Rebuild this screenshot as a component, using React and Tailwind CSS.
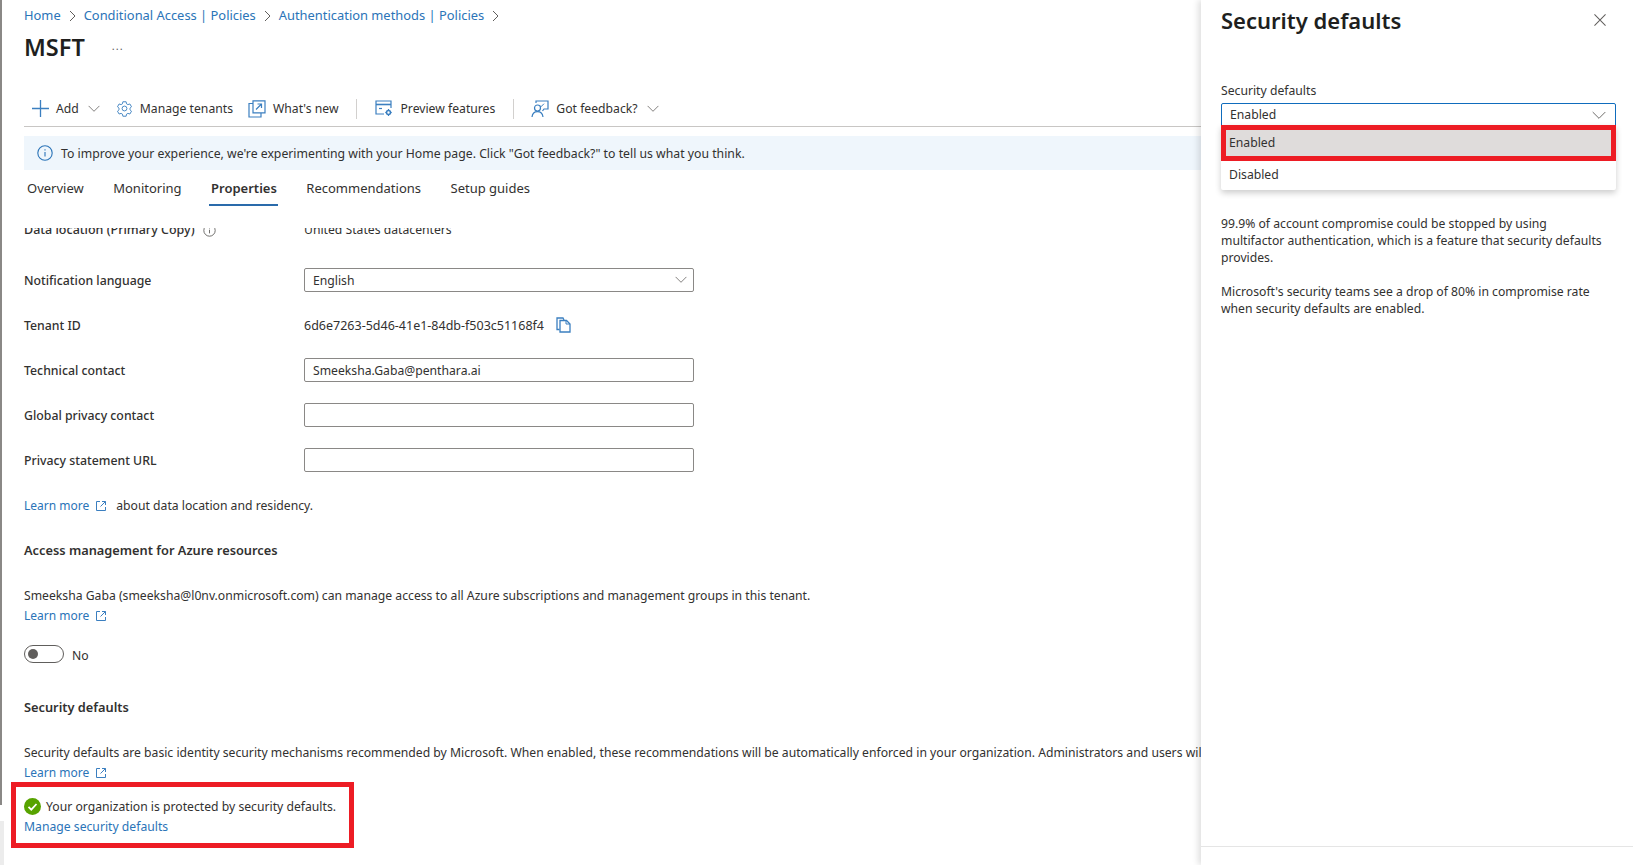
import { Fragment } from "react";

const link = "text-[#2b74b8]";
const blue = "#3b7fc0";

function Chev({ size = 12, color = "#605e5c", className = "" }) {
  return (
    <svg width={size} height={size * 0.6} viewBox="0 0 20 12" className={className} fill="none" stroke={color} strokeWidth="1.3">
      <path d="M1 1.5l9 9 9-9" />
    </svg>
  );
}

function Crumb({ children }) {
  return (
    <Fragment>
      <a className={link}>{children}</a>
      <svg width="7" height="12" viewBox="0 0 7 12" fill="none" stroke="#605e5c" strokeWidth="1">
        <path d="M1 1l5 5-5 5" />
      </svg>
    </Fragment>
  );
}

function External() {
  return (
    <svg width="10" height="10" viewBox="0 0 10 10" fill="none" stroke={blue} strokeWidth="1">
      <path d="M4 .5H.5v9h9V6M6 .5h3.500V4M9.500.5L4.500 5.500" />
    </svg>
  );
}

function LearnMore({ className = "" }) {
  return (
    <div className={`flex items-center gap-[7px] text-[12px] ${className}`}>
      <a className={link}>Learn more</a>
      <External />
    </div>
  );
}

function Gear() {
  return (
    <svg width="17" height="17" viewBox="0 0 24 24" fill="none" stroke={blue} strokeWidth="1.3">
      <path d="M9.700 2.500h4.600l.6 2.900 1.900 1.100 2.800-.9 2.300 4-2.200 2 0 2.200 2.200 2-2.300 4-2.800-.9-1.900 1.100-.6 2.900H9.700l-.6-2.900-1.900-1.100-2.800.9-2.300-4 2.200-2v-2.200l-2.200-2 2.300-4 2.800.9 1.900-1.100z" />
      <circle cx="12" cy="12" r="3.400" />
    </svg>
  );
}

function WhatsNew() {
  return (
    <svg width="18" height="18" viewBox="0 0 18 18" fill="none" stroke={blue} strokeWidth="1.2">
      <path d="M5 3.500H1v13.500h12v-4" />
      <path d="M5 .8h12v12H5z" />
      <path d="M8 9.500l5.500-5.500M9.500 4h4v4" />
    </svg>
  );
}

function Preview() {
  return (
    <svg width="18" height="17" viewBox="0 0 18 17" fill="none" stroke={blue} strokeWidth="1.2">
      <path d="M9 14H1V1h15v7" />
      <path d="M1 4.500h15" strokeWidth="1.6" />
      <path d="M4 8.500h3" />
      <circle cx="13.500" cy="12.500" r="2" strokeWidth="1.6" />
      <path d="M13.500 9v1M13.500 15v1M10.300 12.500h1M15.700 12.500h1" />
    </svg>
  );
}

function Feedback() {
  return (
    <svg width="18" height="18" viewBox="0 0 18 18" fill="none" stroke={blue} strokeWidth="1.2">
      <circle cx="6.500" cy="8" r="3" />
      <path d="M1 17c.4-3.400 2.500-5.400 5.500-5.400S11.600 13.600 12 17" />
      <path d="M5 3V1h12v8h-4l-1.500 2" />
      <path d="M8.500 5.200l1.500 1.500 3-3" strokeWidth="1" />
    </svg>
  );
}

function ToolBtn({ icon, label, chevron }) {
  return (
    <div className="flex items-center gap-[7px]">
      {icon}
      <span>{label}</span>
      {chevron && <Chev className="ml-[2px]" />}
    </div>
  );
}

function Row({ label, children }) {
  return (
    <div className="flex h-[24px] items-center">
      <div className="w-[280px] pt-[2px] text-[12.300px] font-medium">{label}</div>
      {children}
    </div>
  );
}

function Field({ value, children }) {
  return (
    <div className="flex h-[24px] w-[390px] items-center justify-between rounded-[2px] border border-[#8a8886] bg-white pl-2 pr-[6px]">
      <span className="pt-[2px]">{value}</span>
      {children}
    </div>
  );
}

export default function App() {
  return (
    <div className="flex h-[865px] w-[1633px] overflow-hidden bg-white font-['Noto_Sans',sans-serif] text-[12.2px] text-[#323130]">
      <div className="flex w-[4px] shrink-0 flex-col">
        <div className="h-[805px] w-[2px] bg-[#8a8886]" />
        <div className="mt-[16px] flex-1 bg-[#ececec]" />
      </div>

      <main className="flex min-w-0 flex-1 flex-col pl-[20px]">
        <nav className="flex h-[31px] items-center gap-[8px] text-[12.900px]">
          <Crumb>Home</Crumb>
          <Crumb>Conditional Access | Policies</Crumb>
          <Crumb>Authentication methods | Policies</Crumb>
        </nav>

        <div className="mt-[3px] flex h-[28px] items-center">
          <h1 className="text-[23.500px] font-semibold leading-none text-[#201f1e]">MSFT</h1>
          <span className="ml-[27px] mb-[4px] text-[11px] tracking-[1px] text-[#605e5c]">...</span>
        </div>

        <div className="mt-[31px] flex h-[34px] items-center border-b border-[#c8c6c4] pb-[1px] pl-[8px]">
          <ToolBtn
            icon={
              <svg width="17" height="17" viewBox="0 0 17 17" stroke={blue} strokeWidth="1.3">
                <path d="M8.500 0v17M0 8.500h17" />
              </svg>
            }
            label="Add"
            chevron
          />
          <div className="ml-[16px]"><ToolBtn icon={<Gear />} label="Manage tenants" /></div>
          <div className="ml-[15px]"><ToolBtn icon={<WhatsNew />} label="What's new" /></div>
          <div className="mx-[18px] h-[20px] w-px bg-[#d2d0ce]" />
          <ToolBtn icon={<Preview />} label="Preview features" />
          <div className="ml-[18px] mr-[17px] h-[20px] w-px bg-[#d2d0ce]" />
          <ToolBtn icon={<Feedback />} label="Got feedback?" chevron />
        </div>

        <div className="mt-[9px] flex h-[34px] items-center gap-[8px] bg-[#eff6fc] pl-[13px]">
          <svg width="16" height="16" viewBox="0 0 16 16" fill="none" stroke="#2b74b8" strokeWidth="1.100">
            <circle cx="8" cy="8" r="7.200" />
            <path d="M8 7v4.500M8 4.200v1.300" />
          </svg>
          <span className="whitespace-nowrap pt-[2px] text-[12.250px]">To improve your experience, we're experimenting with your Home page. Click "Got feedback?" to tell us what you think.</span>
        </div>

        <div className="flex h-[32px] items-start gap-[29.500px] pl-[3px] pt-[9px] text-[13px]">
          <span>Overview</span>
          <span>Monitoring</span>
          <span className="relative font-semibold">
            Properties
            <span className="absolute -left-[2px] -right-[1px] top-[25px] h-[2px] bg-[#2a6bab]" />
          </span>
          <span>Recommendations</span>
          <span>Setup guides</span>
        </div>

        <div className="-ml-[13px] mt-[26px] min-h-0 flex-1 overflow-hidden pl-[13px]">
          <div className="-mt-[8px] flex h-[20px] items-center">
            <div className="flex w-[280px] items-center gap-[8px] text-[12.500px] font-medium">
              Data location (Primary Copy)
              <svg width="13" height="13" viewBox="0 0 16 16" fill="none" stroke="#605e5c" strokeWidth="1.100">
                <circle cx="8" cy="8" r="7" />
                <path d="M8 7v4.500M8 4.200v1.300" />
              </svg>
            </div>
            <span>United States datacenters</span>
          </div>

          <div className="mt-[28px] flex flex-col gap-[21px]">
            <Row label="Notification language">
              <Field value="English"><Chev /></Field>
            </Row>
            <Row label="Tenant ID">
              <span className="pt-[2px] text-[12.500px]">6d6e7263-5d46-41e1-84db-f503c51168f4</span>
              <svg className="ml-[12px]" width="15" height="16" viewBox="0 0 15 16" fill="none" stroke={blue} strokeWidth="1.300">
                <path d="M3.500 12.500H1V1h6l1 2" />
                <path d="M4 3.500h6.500l3.500 3.500v8H4z" />
                <path d="M10 3.500V7h4" strokeWidth="1" />
              </svg>
            </Row>
            <Row label="Technical contact"><Field value="Smeeksha.Gaba@penthara.ai" /></Row>
            <Row label="Global privacy contact"><Field /></Row>
            <Row label="Privacy statement URL"><Field /></Row>
          </div>

          <div className="mt-[24px] flex h-[20px] items-center gap-[10px]">
            <LearnMore />
            <span>about data location and residency.</span>
          </div>

          <h2 className="mt-[24px] text-[12.800px] font-semibold leading-[20px]">Access management for Azure resources</h2>

          <p className="mt-[26px] whitespace-nowrap leading-[20px]">Smeeksha Gaba (smeeksha@l0nv.onmicrosoft.com) can manage access to all Azure subscriptions and management groups in this tenant.</p>
          <LearnMore className="mt-[1px]" />

          <div className="mt-[17px] flex items-center gap-[8px]">
            <div className="flex h-[18px] w-[40px] items-center rounded-full border border-[#605e5c] pl-[3px]">
              <span className="h-[10px] w-[10px] rounded-full bg-[#605e5c]" />
            </div>
            <span className="pt-[5px]">No</span>
          </div>

          <h2 className="mt-[32px] text-[12.800px] font-semibold leading-[20px]">Security defaults</h2>

          <p className="mt-[26px] whitespace-nowrap leading-[20px]">Security defaults are basic identity security mechanisms recommended by Microsoft. When enabled, these recommendations will be automatically enforced in your organization. Administrators and users will be better protected from common attacks.</p>
          <LearnMore className="mt-[1px]" />

          <div className="-ml-[13px] flex h-[66px] w-[343px] flex-col border-[5px] border-[#ed1c24] pl-[8px] pt-[9px]">
            <div className="flex items-center gap-[5px]">
              <svg width="17" height="17" viewBox="0 0 17 17">
                <circle cx="8.500" cy="8.500" r="8.500" fill="#57a300" />
                <path d="M4.500 8.800l2.800 2.800 5.200-5.600" fill="none" stroke="#fff" strokeWidth="1.800" />
              </svg>
              <span className="pt-[2px]">Your organization is protected by security defaults.</span>
            </div>
            <a className={`${link} mt-[1px]`}>Manage security defaults</a>
          </div>
        </div>
      </main>

      <aside className="relative flex h-full w-[432px] shrink-0 flex-col bg-white shadow-[-3px_0_6px_rgba(0,0,0,0.12)]">
        <div className="flex flex-1 flex-col px-[20px]">
          <div className="flex h-[40px] items-center justify-between pr-[7px]">
            <h2 className="text-[22px] font-semibold text-[#201f1e]">Security defaults</h2>
            <svg width="12" height="12" viewBox="0 0 13 13" stroke="#605e5c" strokeWidth="1.100">
              <path d="M.5.500l12 12M12.500.500l-12 12" />
            </svg>
          </div>

          <label className="mt-[41px] leading-[20px]">Security defaults</label>

          <div className="relative mt-[2px] w-[395px]">
            <div className="flex h-[24px] items-center justify-between rounded-t-[2px] border border-[#0f6cbd] pl-[8px] pr-[9px]">
              <span>Enabled</span>
              <Chev size={14} />
            </div>
            <div className="absolute left-0 right-0 top-[22px] rounded-b-[2px] bg-white shadow-[0_3px_6px_rgba(0,0,0,0.2)]">
              <div className="flex h-[36px] items-center border-[5px] border-[#ed1c24] bg-[#dfdcdb] pl-[3px]">Enabled</div>
              <div className="flex h-[29px] items-center pl-[8px]">Disabled</div>
            </div>
          </div>

          <p className="mt-[88px] leading-[17px]">99.9% of account compromise could be stopped by using multifactor authentication, which is a feature that security defaults provides.</p>
          <p className="mt-[17px] leading-[17px]">Microsoft's security teams see a drop of 80% in compromise rate when security defaults are enabled.</p>
        </div>
        <div className="h-[19px] border-t border-[#e5e5e5]" />
      </aside>
    </div>
  );
}
